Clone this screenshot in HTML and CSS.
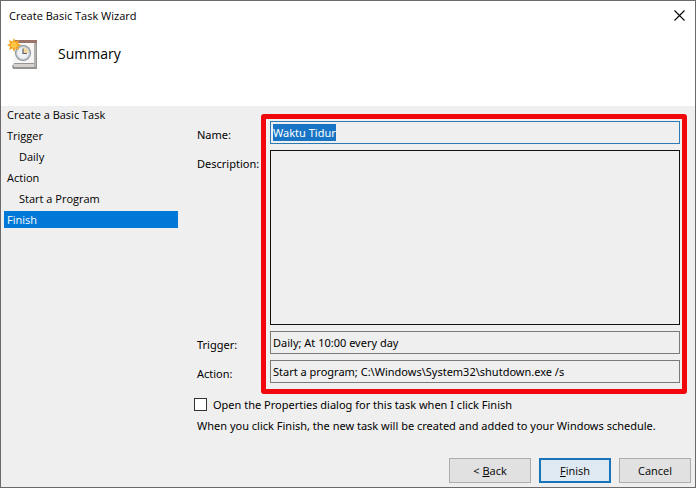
FILE: index.html
```html
<!DOCTYPE html>
<html lang="en">
<head>
    <meta charset="UTF-8">
    <meta name="viewport" content="width=device-width, initial-scale=1.0">
    <title>Create Basic Task Wizard</title>
    <link rel="stylesheet" href="styles.css">
</head>
<body>
    <div class="wizard">
        <header class="header">
            <div class="titlebar">
                <span class="title">Create Basic Task Wizard</span>
                <button type="button" class="close" aria-label="Close">
                    <svg width="11" height="11" viewBox="0 0 11 11"><path d="M.5.5l10 10M10.500.5l-10 10" stroke="#000" stroke-width="1.1" fill="none"/></svg>
                </button>
            </div>
            <div class="banner">
                <svg class="icon" width="32" height="32" viewBox="0 0 32 32">
                    <path d="M8 2h22v29H6l-1-3 3-4z" fill="#979392"/>
                    <path d="M7 5h20v20H5l2-4z" fill="#f7f6f5"/>
                    <path d="M6 26h21v3H7z" fill="#d5d2d0"/>
                    <path d="M8 2h22v3H8z" fill="#9a7468"/>
                    <path d="M27 5h2v24h-2z" fill="#b3b0ae"/>
                    <circle cx="16" cy="15" r="8" fill="#8b939b"/>
                    <circle cx="16" cy="15" r="7" fill="#c5ccd2"/>
                    <circle cx="16" cy="15" r="5.800" fill="#eef2f6"/>
                    <path d="M16 15V9.500a5.500 5.500 0 0 1 5.500 5.500z" fill="#f3d9a0"/>
                    <path d="M16 10.500v5h4" stroke="#59616b" stroke-width="1.200" fill="none"/>
                    <path d="M7 0l1.500 3.500L12 2l-1 3.500 3.500 1.500-3.500 1.500 1 3.500-3.500-1.500L7 14l-1.500-3.500L2 12l1-3.500L0 7l3-1.500L2 2l3.500 1.500z" fill="#f5a623"/>
                    <circle cx="7" cy="7" r="3" fill="#ffc545"/>
                </svg>
                <h1>Summary</h1>
            </div>
        </header>

        <div class="content">
            <nav class="steps">
                <ul>
                    <li>Create a Basic Task</li>
                    <li>Trigger</li>
                    <li class="sub">Daily</li>
                    <li>Action</li>
                    <li class="sub">Start a Program</li>
                    <li class="active" aria-current="step">Finish</li>
                </ul>
            </nav>

            <form class="summary" id="summary">
                <div class="fields">
                    <label for="name">Name:</label>
                    <input type="text" id="name" class="field name" value="Waktu Tidur" readonly>

                    <label for="description">Description:</label>
                    <textarea id="description" class="field description" readonly></textarea>

                    <label for="trigger">Trigger:</label>
                    <input type="text" id="trigger" class="field" value="Daily; At 10:00 every day" readonly>

                    <label for="action">Action:</label>
                    <input type="text" id="action" class="field" value="Start a program; C:\Windows\System32\shutdown.exe /s" readonly>

                    <div class="frame"></div>
                </div>

                <div class="option">
                    <input type="checkbox" id="openprops" class="check">
                    <label for="openprops">Open the Properties dialog for this task when I click Finish</label>
                </div>
                <p class="note">When you click Finish, the new task will be created and added to your Windows schedule.</p>
            </form>
        </div>

        <footer class="buttons">
            <button type="button" class="btn back">&lt; <u>B</u>ack</button>
            <button type="submit" form="summary" class="btn default"><u>F</u>inish</button>
            <button type="button" class="btn">Cancel</button>
        </footer>
    </div>
    <script>
        // the name is selected when the page opens
        document.querySelector("#name").select();
    </script>
</body>
</html>
```
FILE: styles.css
```css
* {
    box-sizing: border-box;
}

body {
    margin: 0;
    font-family: "Open Sans", "Noto Sans", sans-serif;
    font-size: 11px;
    line-height: 17px;
    color: #000;
}

input,
textarea,
button {
    font: inherit;
    color: inherit;
}

.wizard {
    display: flex;
    flex-direction: column;
    min-height: 100vh;
    border: 1px solid #6b696b;
    background-color: #efefef;
}

/* header */
.header {
    padding-bottom: 35px;
    background-color: #fff;
}

.titlebar {
    display: flex;
    justify-content: space-between;
    align-items: center;
    height: 29px;
    padding: 0 10px 0 8px;
}

.close {
    display: flex;
    padding: 0;
    border: none;
    background: none;
}

.banner {
    display: flex;
    align-items: center;
    gap: 19px;
    height: 41px;
    padding: 6px 6px 0;
}

h1 {
    margin: 0;
    font-size: 14px;
    font-weight: normal;
    line-height: 20px;
}

/* list of steps */
.content {
    display: flex;
    flex: 1;
    gap: 16px;
    padding: 0 15px 0 3px;
}

.steps {
    flex: 0 0 174px;
}

.steps ul {
    display: flex;
    flex-direction: column;
    gap: 4px;
    margin: 0;
    padding: 0;
    list-style: none;
}

.steps li {
    padding-left: 3px;
}

.steps .sub {
    padding-left: 15px;
}

.steps .active {
    background-color: #0078d7;
    color: #fff;
}

/* summary form */
.summary {
    flex: 1;
    padding-top: 15px;
    font-family: "Noto Sans", "Open Sans", sans-serif;
}

.fields {
    position: relative;
    display: grid;
    grid-template-columns: 67px 1fr;
    grid-template-rows: 23px 175px 23px 23px;
    gap: 6px;
    padding-left: 3px;
}

.fields label {
    padding-top: 5px;
    white-space: nowrap;
}

.field {
    width: 100%;
    margin: 0;
    padding: 0 2px;
    border: 1px solid #7a7a7a;
    border-radius: 0;
    outline: none;
    background-color: transparent;
}

.name {
    border-color: #2b7ab5;
}

.name::selection {
    background-color: #1874c4;
    color: #fff;
}

.description {
    height: 100%;
    border-color: #111;
    resize: none;
}

/* red marker over the fields */
.frame {
    position: absolute;
    top: -7px;
    right: -7px;
    bottom: -11px;
    left: 67px;
    border: 5px solid #f1060b;
    border-radius: 3px;
    pointer-events: none;
}

.option {
    display: flex;
    align-items: center;
    gap: 6px;
    margin-top: 13px;
}

.check {
    appearance: none;
    width: 13px;
    height: 13px;
    margin: 0;
    border: 1px solid #333;
    background-color: #fff;
}

.check:checked {
    background-color: #0078d7;
}

.note {
    margin: 4px 0 0;
    padding-left: 3px;
}

/* buttons */
.buttons {
    display: flex;
    justify-content: flex-end;
    gap: 8px;
    padding: 0 4px 4px;
}

.btn {
    width: 72px;
    height: 25px;
    padding: 0;
    border: 1px solid #adadad;
    background-color: #e1e1e1;
}

.back {
    width: 82px;
}

.default {
    border: 2px solid #1874b8;
    background-color: #dfe9f2;
}
```
